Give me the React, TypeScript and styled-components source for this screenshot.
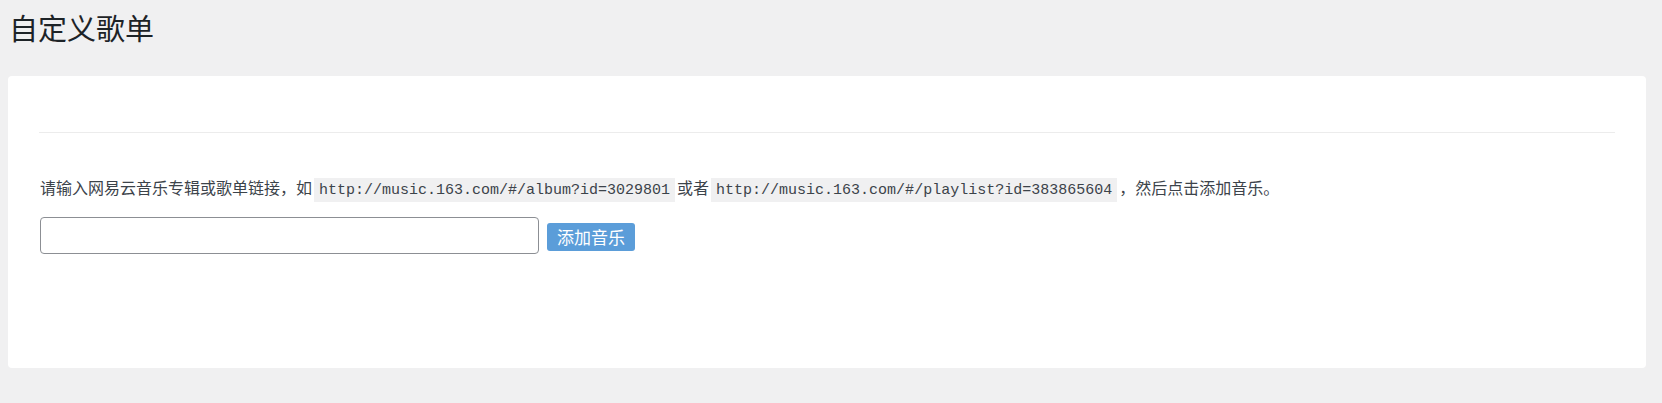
import React from "react";
import styled, { createGlobalStyle } from "styled-components";

const Global = createGlobalStyle`
  html, body {
    margin: 0;
    padding: 0;
    background: #f0f0f1;
  }
  body {
    font-family: "Noto Sans CJK SC", "Noto Sans", sans-serif;
    color: #3c434a;
  }
`;

const Wrap = styled.div`
  padding: 0 16px 0 8px;
`;

const Title = styled.h1`
  margin: 0;
  padding: 7px 0 0 1px;
  height: 76px;
  box-sizing: border-box;
  font-size: 29px;
  font-weight: 400;
  line-height: 40px;
  color: #1d2327;
`;

const Card = styled.div`
  background: #fff;
  border-radius: 4px;
  height: 292px;
  padding: 0 31px;
  box-sizing: border-box;
`;

const CardHead = styled.div`
  height: 56px;
  border-bottom: 1px solid #ececec;
`;

const Body = styled.div`
  padding-top: 41px;
`;

const Para = styled.p`
  margin: 0 0 13px 1px;
  font-size: 16px;
  line-height: 26px;
  color: #3c434a;
`;

const Code = styled.code`
  font-family: "Liberation Mono", monospace;
  font-size: 15px;
  background: #f0f0f1;
  padding: 4px 5px 3px;
  margin: 0 2px;
  color: #3c434a;
`;

const Row = styled.div`
  display: flex;
  align-items: center;
  gap: 8px;
  padding-left: 1px;
`;

const Input = styled.input`
  width: 499px;
  height: 37px;
  box-sizing: border-box;
  border: 1px solid #8c8f94;
  border-radius: 4px;
  background: #fff;
  margin: 0;
`;

const Button = styled.button`
  height: 28px;
  margin-top: 3px;
  padding: 0 10px;
  border: none;
  border-radius: 3px;
  background: #5b9dd9;
  color: #fff;
  font-family: "Noto Sans CJK SC", "Noto Sans", sans-serif;
  font-size: 17px;
  line-height: 28px;
  cursor: pointer;
`;

export default function App() {
  return (
    <Wrap>
      <Global />
      <Title>自定义歌单</Title>
      <Card>
        <CardHead />
        <Body>
          <Para>
            请输入网易云音乐专辑或歌单链接，如<Code>http://music.163.com/#/album?id=3029801</Code>或者<Code>http://music.163.com/#/playlist?id=383865604</Code>，然后点击添加音乐。
          </Para>
          <Row>
            <Input type="text" />
            <Button>添加音乐</Button>
          </Row>
        </Body>
      </Card>
    </Wrap>
  );
}
